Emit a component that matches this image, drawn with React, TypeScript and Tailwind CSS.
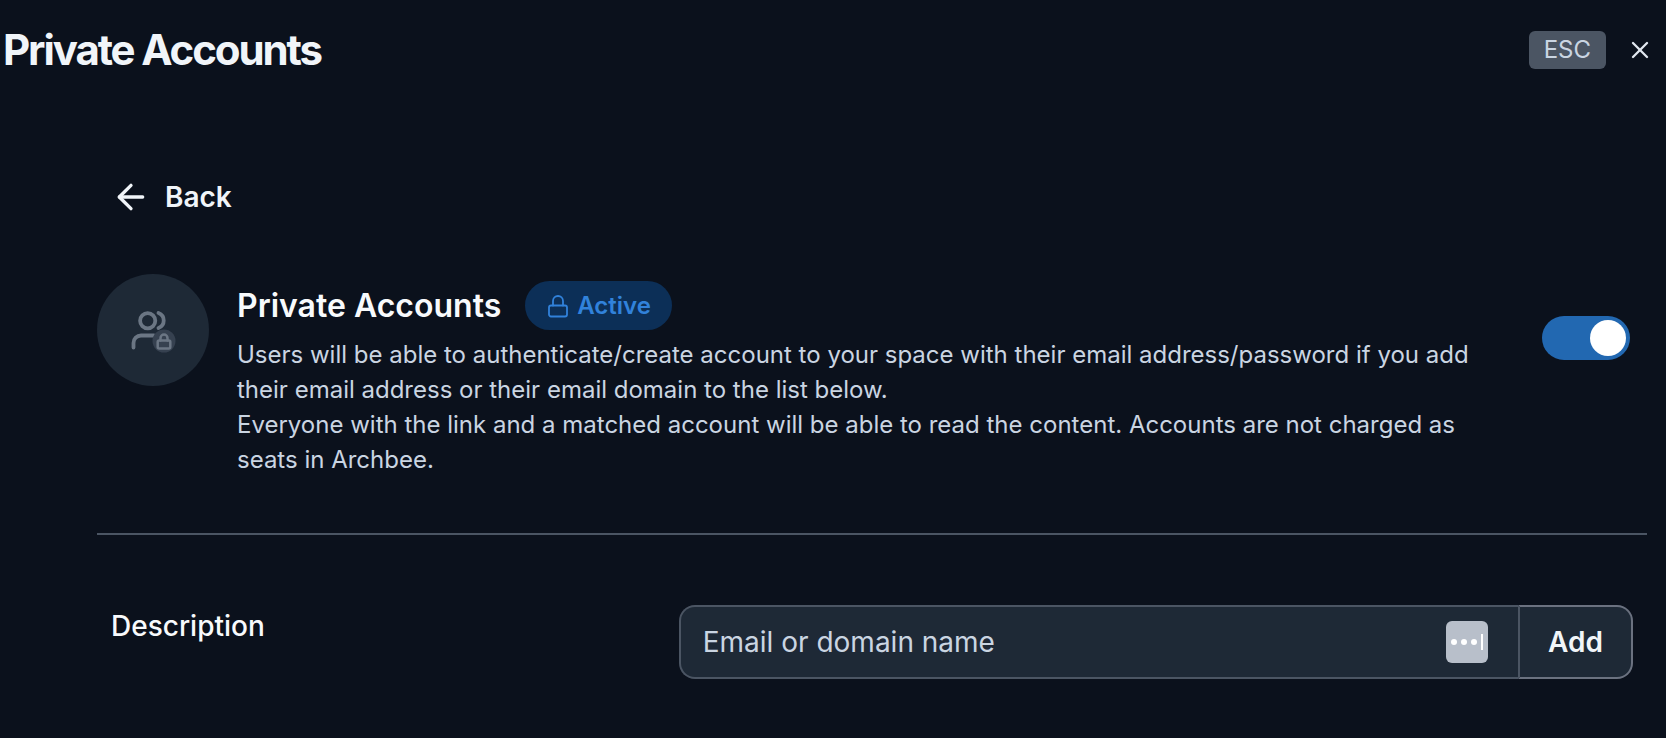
import { useState } from 'react';
import { ArrowLeft, X } from 'lucide-react';

function LockIcon({ className }: { className?: string }) {
  return (
    <svg
      viewBox="0 0 24 24"
      fill="none"
      stroke="currentColor"
      strokeWidth="1.8"
      strokeLinecap="round"
      strokeLinejoin="round"
      className={className}
      aria-hidden="true"
    >
      <rect x="3" y="11.5" width="18" height="11" rx="2" />
      <path d="M7 11.5V7a5 5 0 0 1 10 0v4.500" />
    </svg>
  );
}

function PrivateUsersIcon() {
  return (
    <svg
      viewBox="0 0 48 48"
      fill="none"
      strokeLinecap="round"
      strokeLinejoin="round"
      className="size-12 text-[#6b7684]"
      aria-hidden="true"
    >
      <g stroke="currentColor" strokeWidth="3.800">
        <circle cx="18.7" cy="14.700" r="7.600" />
        <path d="M29.500 7a8 8 0 0 1 0 15" />
        <path d="M4.500 41.500V37a7.500 7.500 0 0 1 7.500-7.500h13" />
      </g>
      <circle cx="35" cy="35" r="11.500" fill="#364150" />
      <g stroke="currentColor" strokeWidth="2.500">
        <rect x="28.700" y="34.500" width="12.600" height="8" rx="1.500" />
        <path d="M31.500 34.500V32a3.500 3.500 0 0 1 7 0v2.500" />
      </g>
    </svg>
  );
}

function Header() {
  return (
    <header className="flex items-center justify-between pt-5 pr-3 pl-[3px]">
      <h1 className="text-[42px] leading-[60px] font-bold tracking-tighter text-slate-100">
        Private Accounts
      </h1>
      <div className="flex items-center gap-5">
        <kbd className="rounded-md bg-[#4b5563] px-[15px] font-[Inter,sans-serif] text-2xl leading-[38px] text-slate-300">
          ESC
        </kbd>
        <button type="button" aria-label="Close" className="text-slate-200">
          <X className="size-7" strokeWidth={2} />
        </button>
      </div>
    </header>
  );
}

function Toggle() {
  const [enabled, setEnabled] = useState(true);

  return (
    <input
      type="checkbox"
      role="switch"
      aria-label="Enable private accounts"
      checked={enabled}
      onChange={(e) => setEnabled(e.target.checked)}
      className="h-11 w-[88px] shrink-0 cursor-pointer appearance-none rounded-full bg-slate-600 p-1 transition-colors before:block before:size-9 before:rounded-full before:bg-white checked:bg-[#2268b1] checked:before:translate-x-11"
    />
  );
}

function AccountsSummary() {
  return (
    <section className="flex items-start gap-7 border-b-2 border-[#4b5563] pt-[57px] pr-[17px] pb-14">
      <div className="flex size-28 shrink-0 items-center justify-center rounded-full bg-[#1e2936]">
        <PrivateUsersIcon />
      </div>
      <div className="min-w-0 flex-1 pt-[7px]">
        <div className="flex items-center gap-6">
          <h2 className="text-[32px] leading-10 font-semibold text-slate-50">Private Accounts</h2>
          <span className="flex h-[49px] items-center gap-[7px] rounded-full bg-[#0c2f57] px-[21px] text-2xl font-semibold text-[#3182db]">
            <LockIcon className="size-6" />
            Active
          </span>
        </div>
        <p className="mt-[7px] text-2xl leading-[35px] text-slate-300">
          Users will be able to authenticate/create account to your space with their email
          address/password if you add their email address or their email domain to the list below.
          <br />
          Everyone with the link and a matched account will be able to read the content. Accounts
          are not charged as seats in Archbee.
        </p>
      </div>
      <div className="flex pt-[42px]">
        <Toggle />
      </div>
    </section>
  );
}

function AddAccountForm() {
  const [value, setValue] = useState('');

  return (
    <form
      className="flex items-start pt-[70px] pr-[14px] pb-12 pl-[14px]"
      onSubmit={(e) => e.preventDefault()}
    >
      <label
        htmlFor="account"
        className="w-[37.3%] text-[28px] leading-[42px] font-medium text-slate-50"
      >
        Description
      </label>
      <div className="flex h-[74px] flex-1">
        <div className="flex min-w-0 flex-1 items-center rounded-l-2xl border-2 border-r-0 border-[#4b5563] bg-[#1e2936] pr-[30px] pl-[22px]">
          <input
            id="account"
            type="text"
            value={value}
            onChange={(e) => setValue(e.target.value)}
            placeholder="Email or domain name"
            className="min-w-0 flex-1 bg-transparent text-[28px] leading-10 text-slate-100 outline-none placeholder:text-slate-300"
          />
          <button type="button" aria-label="Autofill" className="size-[42px] rounded-md bg-[#b8bfca]">
            <svg viewBox="0 0 42 42" className="size-[42px]" fill="#fff" aria-hidden="true">
              <circle cx="8" cy="21" r="3" />
              <circle cx="18" cy="21" r="3" />
              <circle cx="28" cy="21" r="3" />
              <rect x="35" y="13" width="2" height="16" />
            </svg>
          </button>
        </div>
        <button
          type="submit"
          className="rounded-r-2xl border-2 border-[#6b7280] border-l-[#4b5563] bg-[#1e2936] px-7 text-[28px] font-semibold text-slate-100"
        >
          Add
        </button>
      </div>
    </form>
  );
}

export default function App() {
  return (
    <div className="min-h-screen bg-[#0b111c] font-[Inter,sans-serif]">
      <Header />
      <main className="pt-[97px] pr-[19px] pl-[97px]">
        <button
          type="button"
          className="ml-[14px] flex items-center gap-[14px] text-[28px] leading-10 font-semibold text-slate-100"
        >
          <ArrowLeft className="size-10" strokeWidth={2} />
          Back
        </button>
        <AccountsSummary />
        <AddAccountForm />
      </main>
    </div>
  );
}
